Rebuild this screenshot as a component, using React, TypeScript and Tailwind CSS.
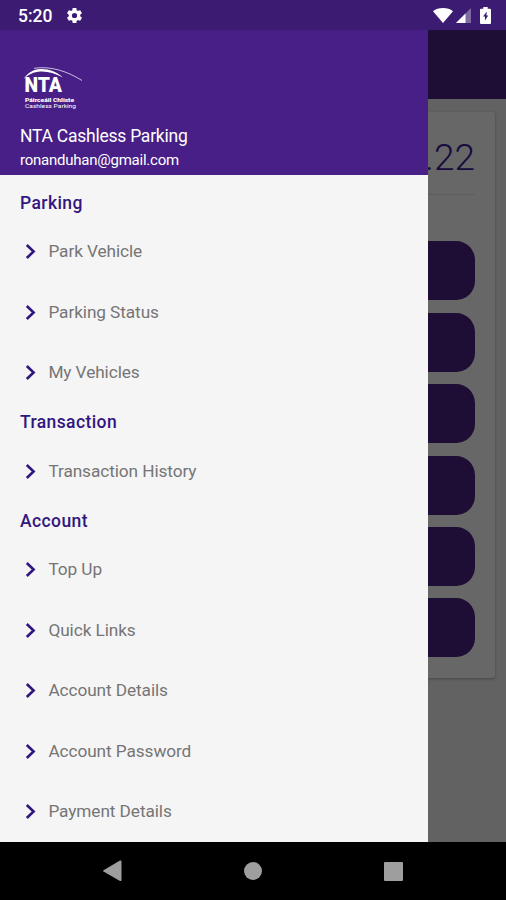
interface MenuSection {
    title: string;
    items: string[];
}

const sections: MenuSection[] = [
    { title: "Parking", items: ["Park Vehicle", "Parking Status", "My Vehicles"] },
    { title: "Transaction", items: ["Transaction History"] },
    { title: "Account", items: ["Top Up", "Quick Links", "Account Details", "Account Password", "Payment Details"] },
];

const actions = [1, 2, 3, 4, 5, 6];

function StatusBar() {
    return (
        <header className="flex h-[30px] shrink-0 items-center bg-[#3c1b72] pl-[18px] pr-[15px] text-white">
            <span className="w-[47px] pt-[2px] text-[17.5px] leading-[30px] font-medium">5:20</span>
            <svg className="h-[19px] w-[19px]" viewBox="0 0 24 24" fill="currentColor">
                <path d="M19.14 12.94c.04-.3.06-.61.06-.94 0-.32-.02-.64-.07-.94l2.03-1.58a.49.49 0 0 0 .12-.61l-1.92-3.32a.49.49 0 0 0-.59-.22l-2.39.96c-.5-.38-1.03-.7-1.62-.94l-.36-2.54A.48.48 0 0 0 13.92 2.4h-3.84c-.24 0-.43.17-.47.41l-.36 2.54c-.59.24-1.13.57-1.62.94l-2.39-.96a.48.48 0 0 0-.59.22L2.74 8.87a.48.48 0 0 0 .12.61l2.03 1.58c-.05.3-.09.63-.09.94s.02.64.07.94l-2.03 1.58a.49.49 0 0 0-.12.61l1.92 3.32c.12.22.37.29.59.22l2.39-.96c.5.38 1.03.7 1.62.94l.36 2.54c.05.24.24.41.48.41h3.84c.24 0 .44-.17.47-.41l.36-2.54c.59-.24 1.13-.56 1.62-.94l2.39.96c.22.08.47 0 .59-.22l1.92-3.32a.48.48 0 0 0-.12-.61zM12 15.3a3.3 3.3 0 1 1 0-6.6 3.3 3.3 0 0 1 0 6.6z" />
            </svg>
            <div className="ml-auto flex items-center gap-[3px]">
                <svg className="h-[15px] w-[20px]" viewBox="0 0 20 15" fill="currentColor">
                    <path d="M10 15 0 3.2C2.6 1.1 6 0 10 0s7.4 1.1 10 3.2z" />
                </svg>
                <svg className="h-[15px] w-[15px]" viewBox="0 0 15 15" fill="currentColor">
                    <path d="M15 0v15H0z" opacity="0.35" />
                    <path d="M9.5 5.5V15H0z" />
                </svg>
                <svg className="ml-[6px] h-[17px] w-[11px]" viewBox="0 0 11 17">
                    <path d="M3.3 0h4.4v1.8H10q1 0 1 1V16q0 1-1 1H1q-1 0-1-1V2.8q0-1 1-1h2.3z" fill="currentColor" />
                    <path d="M6.8 4.5 3 9.6h2v4l3.2-5.2H6.4z" fill="#3c1b72" />
                </svg>
            </div>
        </header>
    );
}

function Logo() {
    return (
        <svg className="h-[48px] w-[66px]" viewBox="0 0 66 48" fill="#fff">
            <path d="M3.5 15C8 8.5 13.5 5.3 20.5 5c8-.3 17 3.2 22.500 8.500C35 9.200 28 7.200 20.500 7.500 13.500 7.800 8.500 10.500 3.500 15z" />
            <path d="M14 4.300C30 2 46 6.500 62 16.500" fill="none" stroke="#fff" strokeWidth="1" opacity="0.7" />
            <text x="4.5" y="28.2" fontSize="19.5" fontWeight="900" textLength="37.5" lengthAdjust="spacingAndGlyphs">NTA</text>
            <text x="5" y="38" fontSize="6.2" fontWeight="900" textLength="49" lengthAdjust="spacingAndGlyphs">Páirceáil Chliste</text>
            <text x="5" y="44" fontSize="6.2" textLength="51" lengthAdjust="spacingAndGlyphs">Cashless Parking</text>
        </svg>
    );
}

function HomePage() {
    return (
        <div className="flex h-full flex-col bg-[#626262]">
            <div className="h-[68.5px] shrink-0 bg-[#1e0d35]" />
            <section className="mx-[11px] mt-[13px] h-[566px] rounded-[3px] bg-[#676767] px-[20px] shadow-[0_1px_3px_rgba(0,0,0,0.3)]">
                <p className="flex h-[83px] items-center justify-end border-b border-[#5e5e5e] pt-[10px] text-[37px] leading-none font-light text-[#160b3c]">.22</p>
                <div className="flex flex-col gap-[12.4px] pt-[46.9px]">
                    {actions.map((action) => (
                        <button key={action} className="h-[59px] rounded-[19px] bg-[#1e0d35]" />
                    ))}
                </div>
            </section>
        </div>
    );
}

function Drawer() {
    return (
        <aside className="absolute inset-y-0 left-0 flex w-[428px] flex-col overflow-hidden bg-[#f5f5f5]">
            <div className="h-[144.5px] shrink-0 bg-[#471f87] pt-[34px] pl-5 text-white">
                <Logo />
                <p className="mt-[12px] text-[17.5px] leading-6 tracking-[-0.24px] whitespace-nowrap">NTA Cashless Parking</p>
                <p className="text-[15px] leading-6 tracking-[-0.24px] whitespace-nowrap">ronanduhan@gmail.com</p>
            </div>
            <nav className="pt-[9.5px]">
                {sections.map((section) => (
                    <div key={section.title}>
                        <h2 className="flex h-[38px] items-center pl-5 text-[17.5px] font-medium tracking-[0.4px] text-[#32167f]">{section.title}</h2>
                        <ul>
                            {section.items.map((item) => (
                                <li key={item} className="flex h-[60.5px] items-center pl-[25px] text-[17.25px] tracking-[-0.09px] text-[#757575]">
                                    <svg className="mr-[12.4px] h-[16px] w-[11px] shrink-0" viewBox="0 0 11 16" fill="none" stroke="#32167f" strokeWidth="2.6">
                                        <path d="M1.8 1 8.6 7.5 1.8 14" />
                                    </svg>
                                    {item}
                                </li>
                            ))}
                        </ul>
                    </div>
                ))}
            </nav>
        </aside>
    );
}

function NavigationBar() {
    return (
        <footer className="flex h-[58px] shrink-0 items-center bg-black text-[#9e9e9e]">
            <svg className="ml-[103px] h-[22px] w-[19px]" viewBox="0 0 19 22" fill="currentColor">
                <path d="M.5 10.3 17 .5q1.5-.5 1.5 1V20q0 1.500-1.500.9L.5 11.500q-.7-.6 0-1.200z" />
            </svg>
            <div className="ml-[122px] h-[18px] w-[18px] rounded-full bg-[#9e9e9e]" />
            <div className="ml-[122px] h-[19px] w-[19px] rounded-[1px] bg-[#9e9e9e]" />
        </footer>
    );
}

export default function App() {
    return (
        <div className="flex h-[900px] w-[506px] flex-col overflow-hidden font-['Roboto',sans-serif]">
            <StatusBar />
            <main className="relative h-[812px] shrink-0">
                <HomePage />
                <Drawer />
            </main>
            <NavigationBar />
        </div>
    );
}
